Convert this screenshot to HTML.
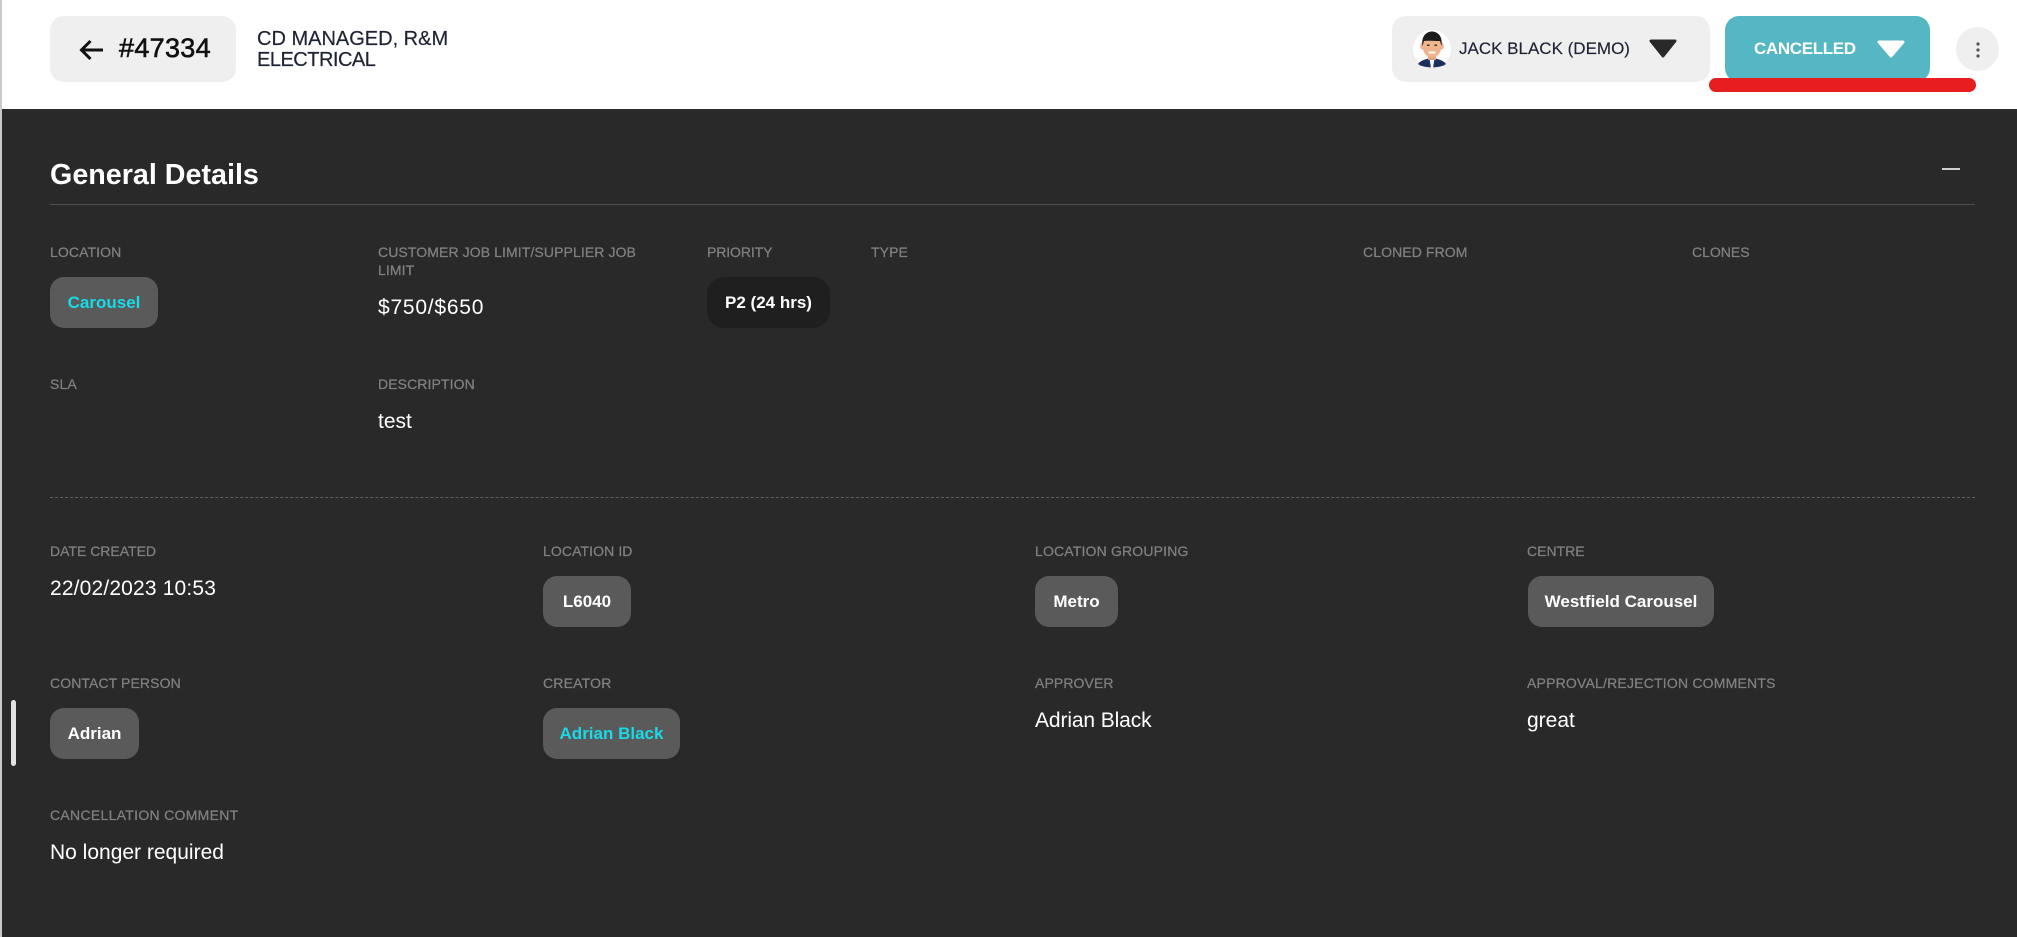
<!DOCTYPE html>
<html><head><meta charset="utf-8"><style>
html,body{margin:0;padding:0;width:2017px;height:937px;overflow:hidden;background:#292929;font-family:"Liberation Sans",sans-serif}
.a{position:absolute;white-space:nowrap}
#hd{left:0;top:0;width:2017px;height:109px;background:#fff}
#edge{left:0;top:0;width:2px;height:937px;background:#c9c9c9}
.l{position:absolute;white-space:nowrap;font-size:14px;line-height:18px;color:#808080;font-weight:400;letter-spacing:.1px;-webkit-text-stroke:.25px #808080}
.v{position:absolute;white-space:nowrap;font-size:21px;line-height:24px;color:#fff}
.c{position:absolute;height:51px;line-height:51px;background:#5a5a5a;border-radius:14px;text-align:center;font-size:17px;font-weight:700;color:#fff;white-space:nowrap}
.cy{color:#18dbe8}
</style></head><body>
<div class="a" id="hd"></div>
<div class="a" id="edge"></div>
<div class="a" style="left:50px;top:16px;width:186px;height:66px;background:#efefef;border-radius:14px"></div>
<svg class="a" style="left:78px;top:38px" width="28" height="24" viewBox="0 0 28 24"><path d="M25 12H4M12.500 3L3.500 12L12.500 21" fill="none" stroke="#111" stroke-width="3"/></svg>
<div class="a" style="left:119px;top:32px;font-size:27px;line-height:32px;color:#111;font-weight:400;letter-spacing:.3px;-webkit-text-stroke:.6px #111">#47334</div>
<div class="a" style="left:257px;top:29px;font-size:20px;line-height:21px;color:#1e2233;-webkit-text-stroke:.2px #1e2233"><span>CD MANAGED, R&amp;M</span><br><span style="letter-spacing:-.5px">ELECTRICAL</span></div>

<div class="a" style="left:1392px;top:16px;width:318px;height:66px;background:#efefef;border-radius:14px"></div>
<svg class="a" style="left:1413px;top:30px" width="38" height="38" viewBox="0 0 38 38"><circle cx="19" cy="19" r="19" fill="#fff"/><path d="M5 34C8 30 13 29 19 28C25 29 30 30 33 34C28 38.500 10 38.500 5 34Z" fill="#1d2f5f"/><path d="M16.500 28.500H21.500L20 38H18Z" fill="#fff"/><rect x="15" y="23" width="8" height="7" fill="#dfa47e"/><ellipse cx="9.500" cy="16" rx="2.300" ry="3.500" fill="#eeb28c"/><ellipse cx="28.500" cy="16" rx="2.300" ry="3.500" fill="#eeb28c"/><path d="M10 8H28V18C28 24 23 27.500 19 27.500C15 27.500 10 24 10 18Z" fill="#f0b48e"/><path d="M9.500 16C8 6 13.500 1.500 19 1.500C24.500 1.500 30 6 28.500 16L27 11C21 11 16 10.500 11 11Z" fill="#1c1c1c"/><rect x="14" y="14.500" width="2.500" height="1.500" fill="#333"/><rect x="21.500" y="14.500" width="2.500" height="1.500" fill="#333"/><rect x="15.500" y="21.500" width="7" height="2" rx="1" fill="#fff"/></svg>
<div class="a" style="left:1459px;top:38px;font-size:17px;line-height:21px;color:#1e2233;-webkit-text-stroke:.15px #1e2233">JACK BLACK (DEMO)</div>
<svg class="a" style="left:1648px;top:39px" width="30" height="19" viewBox="0 0 30 19"><path d="M3 2H27L15 17Z" fill="#292929" stroke="#292929" stroke-width="3" stroke-linejoin="round"/></svg>

<div class="a" style="left:1725px;top:16px;width:205px;height:66px;background:#55b7c4;border-radius:14px"></div>
<div class="a" style="left:1754px;top:38px;font-size:17px;line-height:21px;color:#fff;font-weight:700;letter-spacing:-.35px">CANCELLED</div>
<svg class="a" style="left:1876px;top:39px" width="30" height="19" viewBox="0 0 30 19"><path d="M3 3H27L15 17Z" fill="#fff" stroke="#fff" stroke-width="3" stroke-linejoin="round"/></svg>
<div class="a" style="left:1709px;top:78px;width:267px;height:14px;background:#e81d1f;border-radius:7px"></div>
<div class="a" style="left:1956px;top:27px;width:43px;height:44px;background:#efefef;border-radius:50%"></div>
<svg class="a" style="left:1974px;top:40px" width="8" height="20" viewBox="0 0 8 20"><circle cx="4" cy="4" r="1.600" fill="#555"/><circle cx="4" cy="10" r="1.600" fill="#555"/><circle cx="4" cy="16" r="1.600" fill="#555"/></svg>

<div class="a" style="left:50px;top:158px;font-size:28.700px;line-height:34px;font-weight:700;color:#fff">General Details</div>
<div class="a" style="left:1942px;top:168px;width:18px;height:2px;background:#d0d0d0"></div>
<div class="a" style="left:50px;top:204px;width:1925px;height:1px;background:#4f4f4f"></div>

<div class="l" style="left:50px;top:243px">LOCATION</div>
<div class="c cy" style="left:50px;top:277px;width:108px">Carousel</div>
<div class="l" style="left:378px;top:243px">CUSTOMER JOB LIMIT/SUPPLIER JOB<br>LIMIT</div>
<div class="v" style="left:378px;top:296px;letter-spacing:.77px">$750/$650</div>
<div class="l" style="left:707px;top:243px;letter-spacing:-.1px">PRIORITY</div>
<div class="c" style="left:707px;top:277px;width:123px;background:#1f1f1f;border-radius:17px">P2 (24 hrs)</div>
<div class="l" style="left:871px;top:243px">TYPE</div>
<div class="l" style="left:1363px;top:243px">CLONED FROM</div>
<div class="l" style="left:1692px;top:243px;letter-spacing:0">CLONES</div>

<div class="l" style="left:50px;top:375px">SLA</div>
<div class="l" style="left:378px;top:375px">DESCRIPTION</div>
<div class="v" style="left:378px;top:410px">test</div>
<div class="a" style="left:50px;top:497px;width:1925px;height:0;border-top:1px dashed #5f5f5f"></div>

<div class="l" style="left:50px;top:542px;letter-spacing:0">DATE CREATED</div>
<div class="v" style="left:50px;top:577px;letter-spacing:.16px">22/02/2023 10:53</div>
<div class="l" style="left:543px;top:542px">LOCATION ID</div>
<div class="c" style="left:543px;top:576px;width:88px">L6040</div>
<div class="l" style="left:1035px;top:542px;letter-spacing:.17px">LOCATION GROUPING</div>
<div class="c" style="left:1035px;top:576px;width:83px">Metro</div>
<div class="l" style="left:1527px;top:542px;letter-spacing:0">CENTRE</div>
<div class="c" style="left:1528px;top:576px;width:186px">Westfield Carousel</div>

<div class="l" style="left:50px;top:674px">CONTACT PERSON</div>
<div class="c" style="left:50px;top:708px;width:89px">Adrian</div>
<div class="l" style="left:543px;top:674px;letter-spacing:.2px">CREATOR</div>
<div class="c cy" style="left:543px;top:708px;width:137px">Adrian Black</div>
<div class="l" style="left:1035px;top:674px">APPROVER</div>
<div class="v" style="left:1035px;top:709px;letter-spacing:-.12px">Adrian Black</div>
<div class="l" style="left:1527px;top:674px;letter-spacing:.2px">APPROVAL/REJECTION COMMENTS</div>
<div class="v" style="left:1527px;top:709px">great</div>

<div class="l" style="left:50px;top:806px;letter-spacing:.3px">CANCELLATION COMMENT</div>
<div class="v" style="left:50px;top:841px">No longer required</div>
<div class="a" style="left:11px;top:700px;width:5px;height:66px;background:#e2e2e2;border-radius:3px"></div>
</body></html>
